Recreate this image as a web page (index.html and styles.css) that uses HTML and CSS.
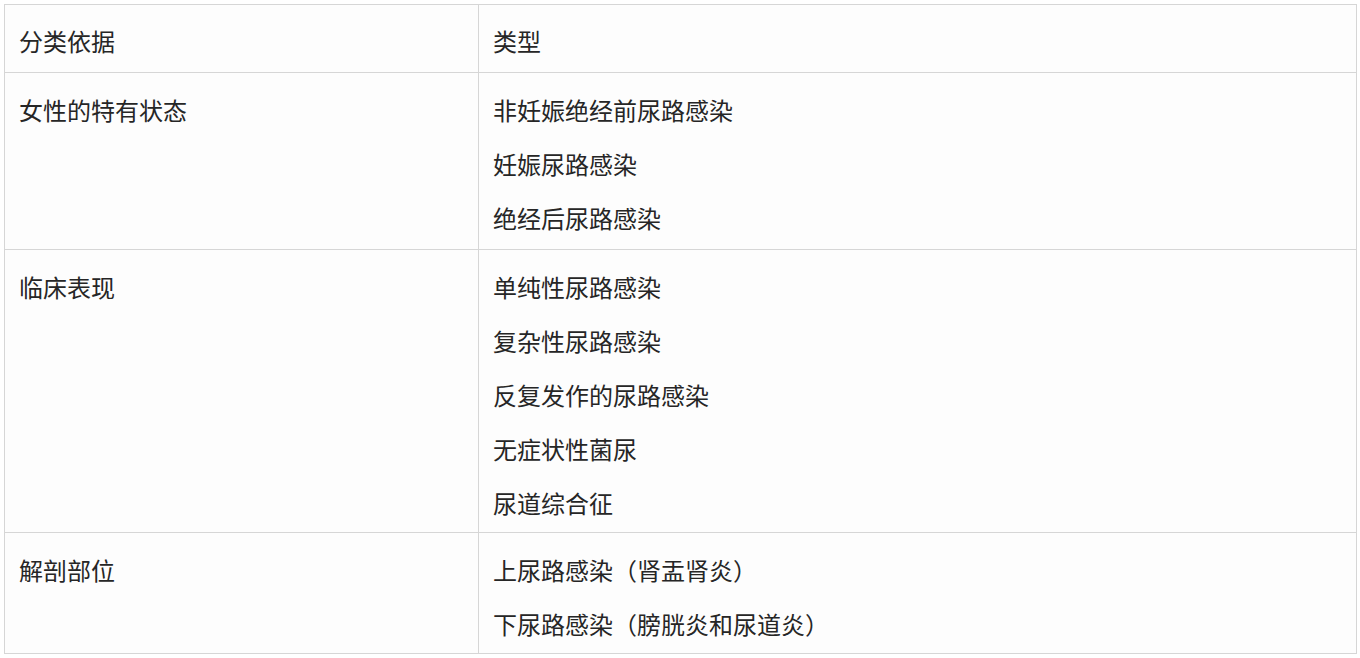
FILE: index.html
```html
<!DOCTYPE html>
<html lang="zh-CN">
<head>
<meta charset="utf-8">
<title>尿路感染分类</title>
<link rel="stylesheet" href="styles.css">
</head>
<body>
<div class="page">
  <div class="grid">
    <div class="cell head"><p>分类依据</p></div>
    <div class="cell head col2"><p>类型</p></div>

    <div class="cell"><p>女性的特有状态</p></div>
    <div class="cell col2">
      <p>非妊娠绝经前尿路感染</p>
      <p>妊娠尿路感染</p>
      <p>绝经后尿路感染</p>
    </div>

    <div class="cell mid"><p>临床表现</p></div>
    <div class="cell col2 mid">
      <p>单纯性尿路感染</p>
      <p>复杂性尿路感染</p>
      <p>反复发作的尿路感染</p>
      <p>无症状性菌尿</p>
      <p>尿道综合征</p>
    </div>

    <div class="cell last"><p>解剖部位</p></div>
    <div class="cell col2 last">
      <p>上尿路感染（肾盂肾炎）</p>
      <p>下尿路感染（膀胱炎和尿道炎）</p>
    </div>
  </div>
</div>
</body>
</html>
```

FILE: styles.css
```css
html, body {
  margin: 0;
  padding: 0;
  background: #ffffff;
}
.page {
  padding: 4px 0 0 4px;
  font-family: "Noto Sans CJK SC", "Noto Sans", sans-serif;
  font-size: 24px;
  color: #262626;
}
.grid {
  display: grid;
  grid-template-columns: 474px 878px;
  width: 1352px;
  border-top: 1px solid #d6d6d6;
  border-left: 1px solid #d6d6d6;
  background: #fdfdfd;
}
.cell {
  border-right: 1px solid #d6d6d6;
  border-bottom: 1px solid #d6d6d6;
  padding: 10px 14px 4px 14px;
}
.cell.head {
  padding-top: 9px;
}
.cell.mid {
  padding-bottom: 2px;
}
.cell.last {
  padding-bottom: 2px;
}
.cell p {
  margin: 0;
  height: 54px;
  line-height: 54px;
  white-space: nowrap;
}
```
